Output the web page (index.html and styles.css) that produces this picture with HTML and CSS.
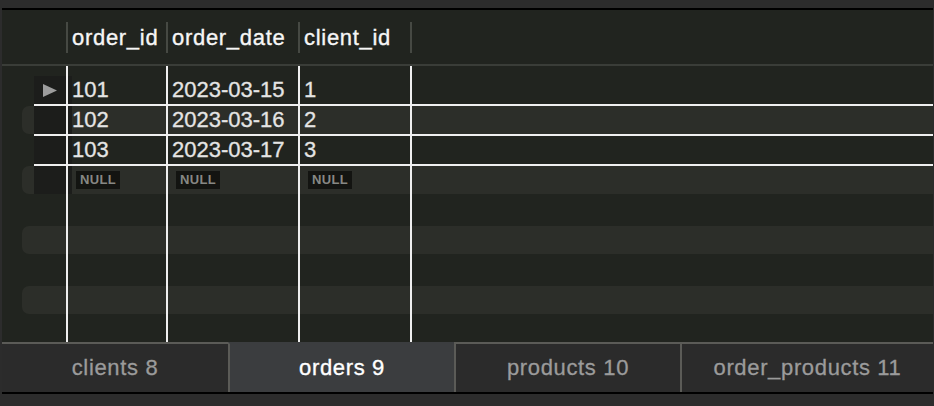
FILE: index.html
```html
<!DOCTYPE html>
<html lang="en">
<head>
<meta charset="utf-8">
<title>orders</title>
<link rel="stylesheet" href="styles.css">
</head>
<body>
<div class="frame">
  <div class="panel">
    <div class="header cols">
      <div class="hsep k4"></div>
      <div class="htext k5">order_id</div>
      <div class="hsep k6"></div>
      <div class="htext k7">order_date</div>
      <div class="hsep k8"></div>
      <div class="htext k9">client_id</div>
      <div class="hsep k10"></div>
    </div>
    <div class="table cols">
      <div class="stripe r2"></div>
      <div class="stripe r4"></div>
      <div class="stripe r6"></div>
      <div class="stripe r8"></div>
      <div class="gutter"></div>
      <div class="hline l1"></div>
      <div class="hline l2"></div>
      <div class="hline l3"></div>
      <div class="vline k4"></div>
      <div class="vline k6"></div>
      <div class="vline k8"></div>
      <div class="vline k10"></div>
      <div class="marker r1">
        <svg width="14" height="13" viewBox="0 0 14 13"><polygon points="0,0 14,6.5 0,13" fill="#9d9d9d"/></svg>
      </div>
      <div class="cell k5 r1">101</div>
      <div class="cell k7 r1">2023-03-15</div>
      <div class="cell k9 r1">1</div>
      <div class="cell k5 r2">102</div>
      <div class="cell k7 r2">2023-03-16</div>
      <div class="cell k9 r2">2</div>
      <div class="cell k5 r3">103</div>
      <div class="cell k7 r3">2023-03-17</div>
      <div class="cell k9 r3">3</div>
      <div class="cell k5 r4"><span class="null">NULL</span></div>
      <div class="cell k7 r4"><span class="null">NULL</span></div>
      <div class="cell k9 r4"><span class="null">NULL</span></div>
    </div>
    <div class="tabs">
      <div class="tab first">clients 8</div>
      <div class="tab active">orders 9</div>
      <div class="tab">products 10</div>
      <div class="tab last">order_products 11</div>
    </div>
  </div>
</div>
</body>
</html>
```

FILE: styles.css
```css
* { box-sizing: border-box; }

html, body {
  margin: 0;
  padding: 0;
  background: #2b2b2b;
  width: 934px;
  height: 406px;
  overflow: hidden;
  font-family: "Liberation Sans", Arial, sans-serif;
}

.frame {
  width: 934px;
  height: 406px;
  padding: 8px 1px 12px 2px;
  background: #2c2c2c;
}

.panel {
  border-top: 2px solid #000;
  border-bottom: 2px solid #000;
  display: flex;
  flex-direction: column;
}

.cols {
  display: grid;
  grid-template-columns: 20px 12px 32px 2px 98px 2px 130px 2px 110px 2px 1fr;
}

/* header */
.header {
  height: 56px;
  grid-template-rows: 54px;
  background: #21241f;
  border-bottom: 2px solid #3a3d38;
}

.hsep {
  grid-row: 1;
  align-self: center;
  height: 31px;
  background: #464943;
  margin-top: 1px;
}

.htext {
  grid-row: 1;
  align-self: center;
  padding-left: 4px;
  padding-top: 2px;
  font-size: 22px;
  letter-spacing: 0.7px;
  color: #f6f6f6;
  white-space: nowrap;
  -webkit-text-stroke: 0.35px #f6f6f6;
}

/* column placement */
.k4 { grid-column: 4; }
.k5 { grid-column: 5; }
.k6 { grid-column: 6; }
.k7 { grid-column: 7; }
.k8 { grid-column: 8; }
.k9 { grid-column: 9; }
.k10 { grid-column: 10; }

/* body */
.table {
  height: 276px;
  overflow: hidden;
  background: #21241f;
  grid-template-rows: 10px repeat(9, 28px 2px);
}

.r1 { grid-row: 2; }
.r2 { grid-row: 4; }
.r3 { grid-row: 6; }
.r4 { grid-row: 8; }
.r6 { grid-row: 12; }
.r8 { grid-row: 16; }

.stripe {
  grid-column: 2 / -1;
  background: #2c2e29;
  border-radius: 7px;
  margin-right: -12px;
}

.gutter {
  grid-column: 3 / 6;
  grid-row: 2 / 9;
  width: 38px;
  background: #1c1d1b;
}

.hline {
  grid-column: 3 / -1;
  background: #efefef;
}
.l1 { grid-row: 3; }
.l2 { grid-row: 5; }
.l3 { grid-row: 7; }

.vline {
  grid-row: 1 / -1;
  background: #efefef;
}

.marker {
  grid-column: 3;
  align-self: center;
  justify-self: center;
  display: flex;
}

.cell {
  padding-left: 4px;
  font-size: 22px;
  line-height: 28px;
  color: #e4e4e4;
  white-space: nowrap;
  display: flex;
  align-items: center;
  -webkit-text-stroke: 0.3px #e4e4e4;
}

.null {
  display: inline-block;
  width: 44px;
  height: 18px;
  margin-left: 4px;
  background: #131411;
  color: #878884;
  font-size: 13px;
  font-weight: bold;
  line-height: 18px;
  letter-spacing: 0.3px;
  text-align: center;
  -webkit-text-stroke: 0;
}

/* tabs */
.tabs {
  display: flex;
  height: 50px;
}

.tab {
  width: 226px;
  height: 50px;
  border-top: 2px solid #5b5b57;
  border-left: 2px solid #5b5b57;
  background: #2b2b2b;
  color: #9b9b9b;
  font-size: 22px;
  letter-spacing: 0.65px;
  line-height: 48px;
  text-align: center;
  white-space: nowrap;
  -webkit-text-stroke: 0.3px #9b9b9b;
}

.tab.first {
  border-left: 0;
}

.tab.last {
  flex: 1;
}

.tab.active {
  background: #3b3d3f;
  border-top-color: #3b3d3f;
  color: #ffffff;
  -webkit-text-stroke: 0.35px #ffffff;
}
```
